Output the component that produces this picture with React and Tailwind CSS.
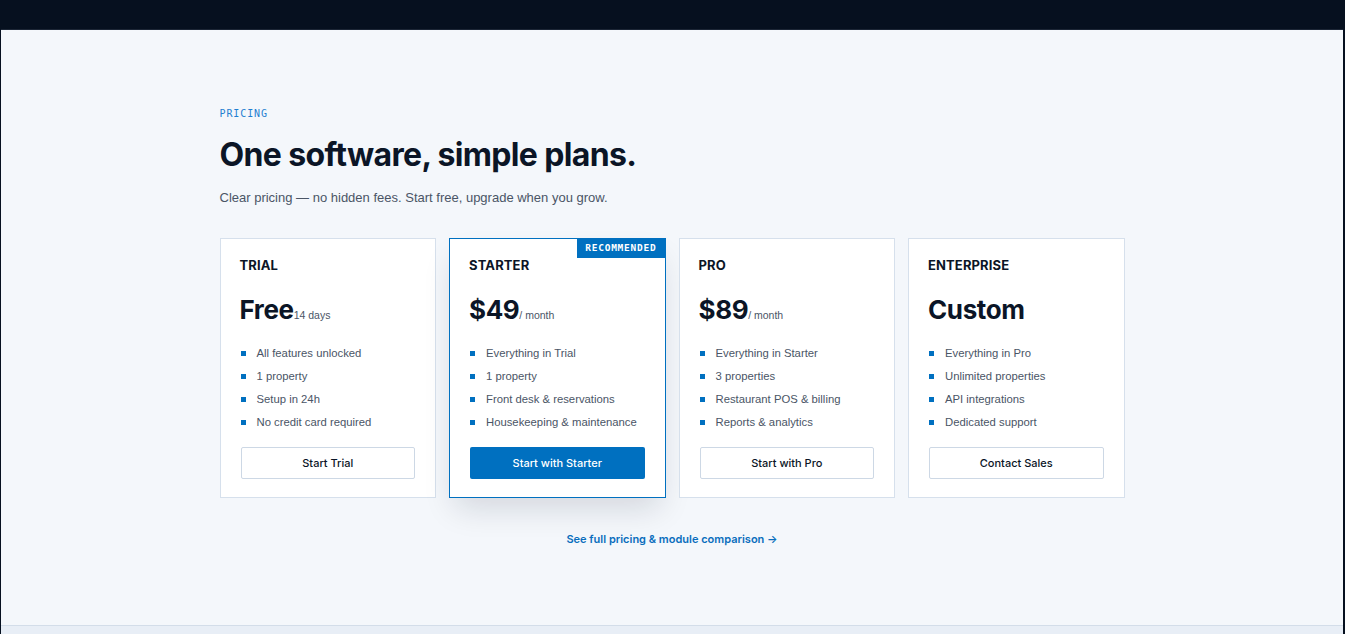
import React from "react";

const plans = [
  {
    name: "TRIAL",
    price: "Free",
    unit: "14 days",
    features: ["All features unlocked", "1 property", "Setup in 24h", "No credit card required"],
    cta: "Start Trial",
  },
  {
    name: "STARTER",
    price: "$49",
    unit: "/ month",
    featured: true,
    features: ["Everything in Trial", "1 property", "Front desk & reservations", "Housekeeping & maintenance"],
    cta: "Start with Starter",
  },
  {
    name: "PRO",
    price: "$89",
    unit: "/ month",
    features: ["Everything in Starter", "3 properties", "Restaurant POS & billing", "Reports & analytics"],
    cta: "Start with Pro",
  },
  {
    name: "ENTERPRISE",
    price: "Custom",
    features: ["Everything in Pro", "Unlimited properties", "API integrations", "Dedicated support"],
    cta: "Contact Sales",
  },
];

function PlanCard({ plan }) {
  const frame = plan.featured
    ? "border border-solid border-[color:#0070c0] shadow-[0_16px_30px_-6px_rgba(15,23,42,0.14)]"
    : "border border-solid border-[color:#d6e0ec]";
  return (
    <div className={"relative flex flex-col bg-white px-5 pt-[19px] pb-[18px] " + frame}>
      {plan.featured && (
        <div className="absolute right-0 top-0 bg-[#0070c0] px-[8px] h-[19px] flex items-center text-[9.5px] font-bold tracking-[0.08em] text-white font-['DejaVu_Sans_Mono',monospace]">
          RECOMMENDED
        </div>
      )}
      <div className="-ml-px text-[13px] font-bold leading-[14px] tracking-[0.01em] text-[#0b1526]">{plan.name}</div>
      <div className="mt-[22px] flex items-baseline h-[32px]">
        <span className="-ml-px text-[26px] font-bold leading-[32px] tracking-[-0.015em] text-[#0b1526]">{plan.price}</span>
        {plan.unit && (
          <span className="text-[10.5px] text-[#4a5566] font-['Liberation_Sans',sans-serif]">{plan.unit}</span>
        )}
      </div>
      <ul className="mt-[16px] flex flex-col font-['Liberation_Sans',sans-serif]">
        {plan.features.map((f) => (
          <li key={f} className="flex items-center h-[23px] whitespace-nowrap text-[11.3px] text-[#4a5566]">
            <span className="mr-[11px] h-[5px] w-[5px] shrink-0 bg-[#0070c0]" />
            {f}
          </li>
        ))}
      </ul>
      <button
        className={
          "mt-[13px] h-[32px] rounded-[2px] text-[11px] font-medium " +
          (plan.featured
            ? "bg-[#0070c0] text-white"
            : "border border-solid border-[color:#cdd8e5] bg-white text-[#0b1526]")
        }
      >
        {plan.cta}
      </button>
    </div>
  );
}

export default function App() {
  return (
    <div className="h-[634px] w-[1345px] overflow-hidden flex flex-col bg-[#06101f] font-['Inter',sans-serif]">
      <div className="h-[29px] shrink-0 bg-[#06101f]" />
      <div className="flex-1 flex flex-col ml-[1px] mr-[2px] bg-[#f4f7fb] border-t border-[#1c2636]">
        <main className="flex-1">
          <div className="mx-auto w-[905px] pt-[77px]">
            <div className="text-[10px] font-medium leading-[14px] tracking-[0.09em] text-[#1f7fd1] font-['DejaVu_Sans_Mono',monospace]">
              PRICING
            </div>
            <h1 className="mt-[14px] text-[32px] font-bold leading-[40px] tracking-[-0.02em] text-[#0b1526]">
              One software, simple plans.
            </h1>
            <p className="mt-[14px] text-[13px] leading-[18px] text-[#4a5566] font-['Liberation_Sans',sans-serif]">
              Clear pricing — no hidden fees. Start free, upgrade when you grow.
            </p>
            <div className="mt-[31px] grid grid-cols-4 gap-[13px]">
              {plans.map((p) => (
                <PlanCard key={p.name} plan={p} />
              ))}
            </div>
            <div className="mt-[31px] text-center leading-[16px]">
              <a className="text-[11px] font-semibold text-[#0a6ebd]">See full pricing &amp; module comparison →</a>
            </div>
          </div>
        </main>
        <div className="h-[9px] shrink-0 bg-[#e8eef6] border-t border-[#d3dde9]" />
      </div>
    </div>
  );
}
